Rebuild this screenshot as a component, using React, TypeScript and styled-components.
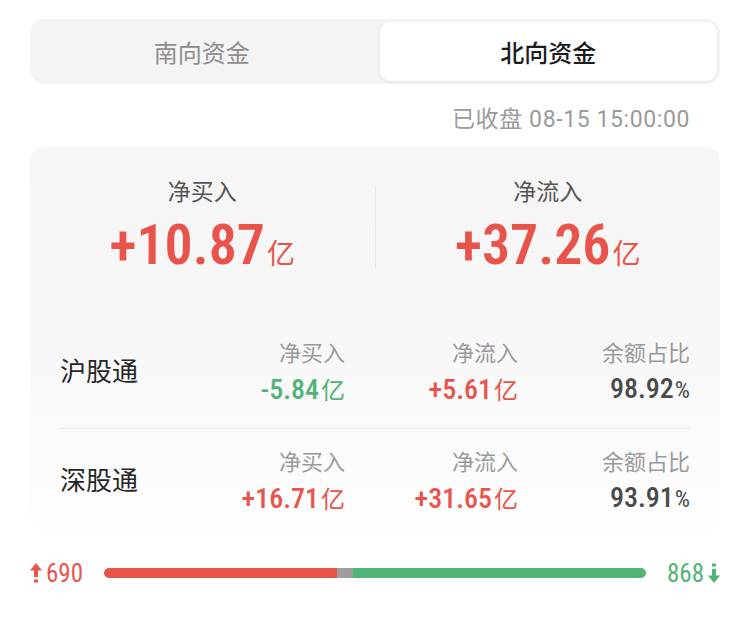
import React from "react";
import styled, { createGlobalStyle } from "styled-components";

const Global = createGlobalStyle`
  html, body { margin: 0; padding: 0; background: #ffffff; }
  body { font-family: Roboto, "Noto Sans CJK SC", sans-serif; -webkit-font-smoothing: antialiased; }
`;

const RED = "#e8544b";
const GREEN = "#52b377";
const NUM = `"Roboto Condensed", "DejaVu Sans Condensed", Roboto, sans-serif`;

const Page = styled.div`
  width: 750px;
  padding: 19px 30px 0;
  box-sizing: border-box;
`;

const Tabs = styled.div`
  display: grid;
  grid-template-columns: 1fr 1fr;
  gap: 9px;
  padding: 3px;
  height: 65px;
  box-sizing: border-box;
  background: #f4f4f4;
  border-radius: 14px;
`;

const Tab = styled.div<{ $active?: boolean }>`
  display: flex;
  align-items: center;
  justify-content: center;
  border-radius: 11px;
  font-family: "Noto Sans CJK SC", sans-serif;
  font-size: 24px;
  font-weight: ${(p) => (p.$active ? 500 : 400)};
  color: ${(p) => (p.$active ? "#1c1c1c" : "#8e8e8e")};
  background: ${(p) => (p.$active ? "#ffffff" : "transparent")};
  box-shadow: ${(p) => (p.$active ? "0 1px 4px rgba(0,0,0,0.08)" : "none")};
`;

const Stamp = styled.div`
  text-align: right;
  padding: 21px 30px 0 0;
  height: 42px;
  line-height: 30px;
  font-family: Roboto, "Noto Sans CJK SC", sans-serif;
  font-size: 23px;
  letter-spacing: 0.6px;
  color: #9a9a9a;
`;

const Card = styled.div`
  border-radius: 14px;
  background: linear-gradient(180deg, #f5f5f5 0%, #f7f7f7 45%, #fbfbfb 80%, #ffffff 100%);
  padding: 0 30px;
`;

const Summary = styled.div`
  display: grid;
  grid-template-columns: 1fr 1px 1fr;
  padding: 28px 0 40px;
  margin: 0 -30px;
`;

const SummaryCell = styled.div`
  display: flex;
  flex-direction: column;
  align-items: center;
  gap: 12px;
`;

const SummaryLabel = styled.div`
  font-family: "Noto Sans CJK SC", sans-serif;
  font-size: 23px;
  line-height: 30px;
  color: #555;
`;

const BigValue = styled.div`
  font-family: ${NUM};
  font-size: 56px;
  line-height: 56px;
  font-weight: 600;
  color: ${RED};
  display: flex;
  align-items: baseline;
`;

const Unit = styled.span<{ $size: number }>`
  font-family: "Noto Sans CJK SC", sans-serif;
  font-size: ${(p) => p.$size}px;
  font-weight: 400;
  margin-left: 2px;
`;

const VDivider = styled.div`
  width: 1px;
  height: 83px;
  align-self: center;
  background: #e6e6e6;
`;

const Row = styled.div<{ $last?: boolean }>`
  display: grid;
  grid-template-columns: 1fr 172px 173px 172px;
  align-items: center;
  padding: 16px 0 ${(p) => (p.$last ? 22 : 21)}px;
  border-bottom: ${(p) => (p.$last ? "none" : "1px solid #ececec")};
`;

const RowName = styled.div`
  font-family: "Noto Sans CJK SC", sans-serif;
  font-size: 26px;
  color: #262626;
  padding-bottom: 4px;
`;

const Cell = styled.div`
  display: flex;
  flex-direction: column;
  align-items: flex-end;
  gap: 6px;
`;

const CellLabel = styled.div`
  font-family: "Noto Sans CJK SC", sans-serif;
  font-size: 22px;
  line-height: 30px;
  color: #9a9a9a;
`;

const CellValue = styled.div<{ $color: string }>`
  font-family: ${NUM};
  font-size: 28px;
  line-height: 34px;
  font-weight: 500;
  color: ${(p) => p.$color};
  display: flex;
  align-items: baseline;
`;

const Pct = styled.span`
  font-family: ${NUM};
  font-size: 24px;
  font-weight: 400;
  margin-left: 1px;
`;

const BarRow = styled.div`
  display: flex;
  align-items: center;
  height: 30px;
  margin-top: 20px;
`;

const Count = styled.div<{ $color: string }>`
  display: flex;
  align-items: center;
  gap: 4px;
  width: 74px;
  font-family: ${NUM};
  font-size: 25px;
  color: ${(p) => p.$color};
`;

const CountRight = styled(Count)`
  justify-content: flex-end;
`;

const Bar = styled.div`
  flex: 1;
  display: flex;
  height: 10px;
  border-radius: 5px;
  overflow: hidden;
`;

const Seg = styled.div<{ $color: string }>`
  background: ${(p) => p.$color};
  height: 100%;
`;

const UpArrow = () => (
  <svg width="12" height="20" viewBox="0 0 12 20">
    <path d="M6 0 L12 7.5 L8 7.5 L8 14 L4 14 L4 7.5 L0 7.5 Z" fill={RED} />
    <rect x="4" y="16.5" width="4" height="3" fill={RED} />
  </svg>
);

const DownArrow = () => (
  <svg width="12" height="20" viewBox="0 0 12 20">
    <rect x="4" y="0.5" width="4" height="3" fill={GREEN} />
    <path d="M6 20 L12 12.5 L8 12.5 L8 6 L4 6 L4 12.5 L0 12.5 Z" fill={GREEN} />
  </svg>
);

type RowData = {
  name: string;
  buy: string;
  buyColor: string;
  flow: string;
  flowColor: string;
  ratio: string;
};

const rows: RowData[] = [
  { name: "沪股通", buy: "-5.84", buyColor: GREEN, flow: "+5.61", flowColor: RED, ratio: "98.92" },
  { name: "深股通", buy: "+16.71", buyColor: RED, flow: "+31.65", flowColor: RED, ratio: "93.91" },
];

export default function App() {
  return (
    <Page>
      <Global />
      <Tabs>
        <Tab>南向资金</Tab>
        <Tab $active>北向资金</Tab>
      </Tabs>
      <Stamp>已收盘 08-15 15:00:00</Stamp>
      <Card>
        <Summary>
          <SummaryCell>
            <SummaryLabel>净买入</SummaryLabel>
            <BigValue>
              +10.87<Unit $size={28}>亿</Unit>
            </BigValue>
          </SummaryCell>
          <VDivider />
          <SummaryCell>
            <SummaryLabel>净流入</SummaryLabel>
            <BigValue>
              +37.26<Unit $size={28}>亿</Unit>
            </BigValue>
          </SummaryCell>
        </Summary>
        {rows.map((r, i) => (
          <Row key={r.name} $last={i === rows.length - 1}>
            <RowName>{r.name}</RowName>
            <Cell>
              <CellLabel>净买入</CellLabel>
              <CellValue $color={r.buyColor}>
                {r.buy}
                <Unit $size={24}>亿</Unit>
              </CellValue>
            </Cell>
            <Cell>
              <CellLabel>净流入</CellLabel>
              <CellValue $color={r.flowColor}>
                {r.flow}
                <Unit $size={24}>亿</Unit>
              </CellValue>
            </Cell>
            <Cell>
              <CellLabel>余额占比</CellLabel>
              <CellValue $color="#4a4a4a">
                {r.ratio}
                <Pct>%</Pct>
              </CellValue>
            </Cell>
          </Row>
        ))}
      </Card>
      <BarRow>
        <Count $color={RED}>
          <UpArrow />
          690
        </Count>
        <Bar>
          <Seg $color={RED} style={{ flex: 233 }} />
          <Seg $color="#9e9e9e" style={{ flex: 16 }} />
          <Seg $color={GREEN} style={{ flex: 293 }} />
        </Bar>
        <CountRight $color={GREEN}>
          868
          <DownArrow />
        </CountRight>
      </BarRow>
    </Page>
  );
}
